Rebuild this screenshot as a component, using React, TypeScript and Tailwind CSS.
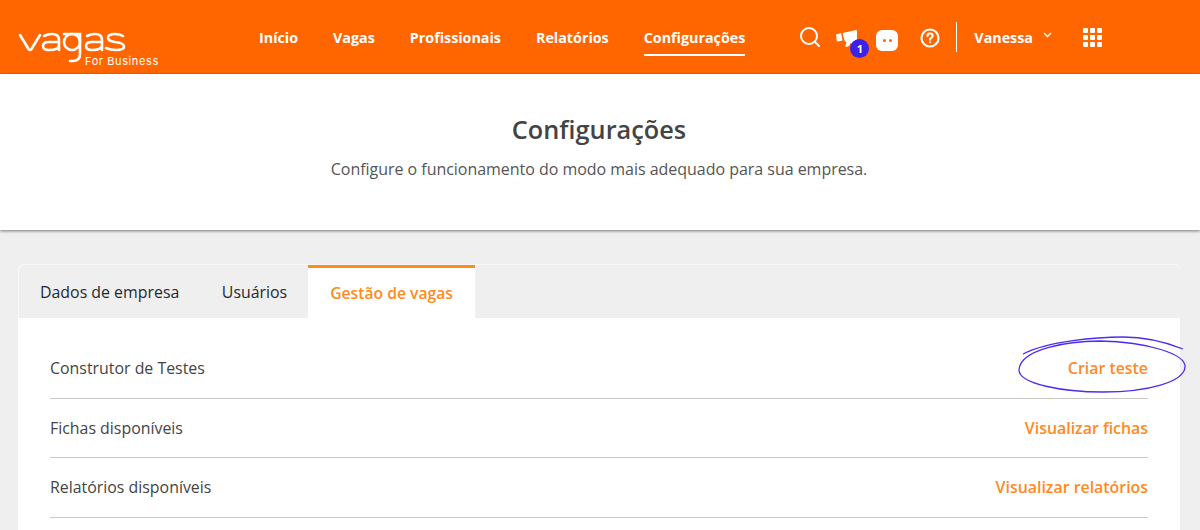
import { Search } from 'lucide-react';

const navItems = ['Início', 'Vagas', 'Profissionais', 'Relatórios', 'Configurações'];

const rows = [
  { label: 'Construtor de Testes', action: 'Criar teste' },
  { label: 'Fichas disponíveis', action: 'Visualizar fichas' },
  { label: 'Relatórios disponíveis', action: 'Visualizar relatórios' },
];

const Logo = () => (
  <div className="relative w-[140px] h-[36px] shrink-0 self-start mt-[32px]">
    <svg width="110" height="32" viewBox="0 0 110 32" fill="none" stroke="white" strokeWidth="2.600" strokeLinecap="round" className="absolute left-0 top-0">
      <path d="M2 3 L10.500 17 Q12 19 13.500 17 L22 3" />
      <path d="M26 4 Q30 2 34 2 Q41 2 41 8 V18 M41 10 H31 Q25 10 25 14 Q25 18 31 18 Q41 18 41 13" />
      <circle cx="54" cy="10" r="8" />
      <path d="M46 2 H62 V22 Q62 29 55 29 H52" />
      <path d="M69 4 Q73 2 77 2 Q84 2 84 8 V18 M84 10 H74 Q68 10 68 14 Q68 18 74 18 Q84 18 84 13" />
      <path d="M105 4 Q102 2 97 2 Q90 2 90 6 Q90 9 97 10 Q106 11 106 14.500 Q106 18 98 18 Q92 18 88 16" />
    </svg>
    <span className="absolute left-[67px] top-[22px] text-[11px] leading-[14px] tracking-[0.6px] text-white whitespace-nowrap font-['Inter',sans-serif]">For Business</span>
  </div>
);

export default function App() {
  return (
    <div className="w-[1200px] h-[530px] overflow-hidden bg-[#efefef] font-['Open_Sans',sans-serif]">
      <header className="h-[74px] bg-[#ff6600] flex items-center pl-[18px] text-white">
        <Logo />
        <nav className="flex items-center gap-[35px] ml-[101px] text-[14.300px] font-bold">
          {navItems.map((item) => (
            <a key={item} className={`pt-[10px] pb-[6px] leading-[20px] border-b-2 ${item === 'Configurações' ? 'border-white' : 'border-transparent'}`}>
              {item}
            </a>
          ))}
        </nav>
        <div className="flex items-center ml-[53px]">
          <Search size={24} strokeWidth={2} />
          <div className="relative ml-[14px] mt-[6px] w-[24px] h-[20px]">
            <svg width="22" height="19" viewBox="0 0 22 19" fill="white">
              <path d="M0 4.500 L5 3 L6.500 10.500 L2 11.500 Q1 11.500 .7 10.500 Z" />
              <path d="M6.500 3 L20 0 Q21 0 21 1 V16 L14.500 13 Q13 18 9 16.500 L10.500 12.500 L8.500 10.500 Z" />
            </svg>
            <span className="absolute left-[14px] top-[9px] w-[19px] h-[19px] rounded-full bg-[#3a22e8] flex items-center justify-center text-[11px] font-bold leading-none">1</span>
          </div>
          <div className="ml-[16px] mt-[6px] w-[22px] h-[21px] bg-white rounded-[6px] flex items-center justify-center gap-[3px]">
            <span className="w-[3px] h-[3px] rounded-full bg-[#ff6600]" />
            <span className="w-[3px] h-[3px] rounded-full bg-[#ff6600]" />
          </div>
          <svg className="ml-[22px] mt-[1px]" width="20" height="20" viewBox="0 0 20 20" fill="none" stroke="white" strokeWidth="2.200">
            <circle cx="10" cy="10" r="8.500" />
            <path d="M7.500 8 q0 -2.500 2.500 -2.500 q2.600 0 2.600 2.300 q0 1.500 -1.500 2.200 q-1.100 .6 -1.100 1.700" strokeLinecap="round" />
            <circle cx="10" cy="14.300" r="0.600" fill="white" strokeWidth="1" />
          </svg>
          <div className="ml-[16px] w-px h-[30px] bg-white" />
          <span className="ml-[17px] text-[14.300px] font-bold pt-[1px]">Vanessa</span>
          <svg className="ml-[10px] mb-[4px]" width="9" height="6" viewBox="0 0 9 6" fill="none" stroke="white" strokeWidth="1.300">
            <path d="M1 1 L4.500 4.500 L8 1" />
          </svg>
          <div className="ml-[31px] grid grid-cols-3 gap-[2px]">
            {Array.from({ length: 9 }).map((_, i) => (
              <span key={i} className="w-[5px] h-[5px] bg-white rounded-[1px]" />
            ))}
          </div>
        </div>
      </header>

      <section className="h-[156px] bg-white shadow-[0_1px_3px_rgba(0,0,0,0.5)] flex flex-col items-center pt-[38px] pr-[2px]">
        <h1 className="text-[25.300px] leading-[34px] font-semibold text-[#444444]">Configurações</h1>
        <p className="mt-[12px] text-[16px] leading-[22px] tracking-[-0.03px] text-[#555555]">
          Configure o funcionamento do modo mais adequado para sua empresa.
        </p>
      </section>

      <main className="ml-[18px] mr-[20px] mt-[34px] h-[270px] rounded-t-[6px] border-t border-[#f8f8f8] bg-white">
        <div className="flex h-[53px] bg-[#efefef] rounded-t-[6px] text-[15.900px] text-[#1f2933] border-l border-[#f8f8f8]">
          <button className="px-[21px] pt-[3px]">Dados de empresa</button>
          <button className="pl-[21.500px] pr-[21px] pt-[3px]">Usuários</button>
          <button className="px-[22px] pt-[1px] bg-white border-t-[3px] border-[#ff8a1e] text-[#ff8a1e] font-semibold text-[15.700px]">Gestão de vagas</button>
        </div>
        <div className="px-[32px] pt-[21px]">
          {rows.map((row) => (
            <div key={row.label} className="relative flex items-center justify-between h-[59.500px] pt-[2px] border-b border-[#c8c8c8] text-[15.900px] text-[#444444]">
              <span>{row.label}</span>
              <a className="font-semibold text-[#ff8a1e]">{row.action}</a>
              {row.action === 'Criar teste' && (
                <svg className="absolute left-[968px] top-[-3px]" width="170" height="60" viewBox="0 0 170 60" fill="none" stroke="#4a2df0" strokeWidth="1.300">
                  <path d="M5 18 C30 5 80 1 105 1 C130 1 150 7 165 13" />
                  <path d="M82 5 C50 5 2 13 1 34 C1 48 45 56 85 56 C130 56 166 46 167 31 C168 18 130 6 82 5" />
                </svg>
              )}
            </div>
          ))}
        </div>
      </main>
    </div>
  );
}
